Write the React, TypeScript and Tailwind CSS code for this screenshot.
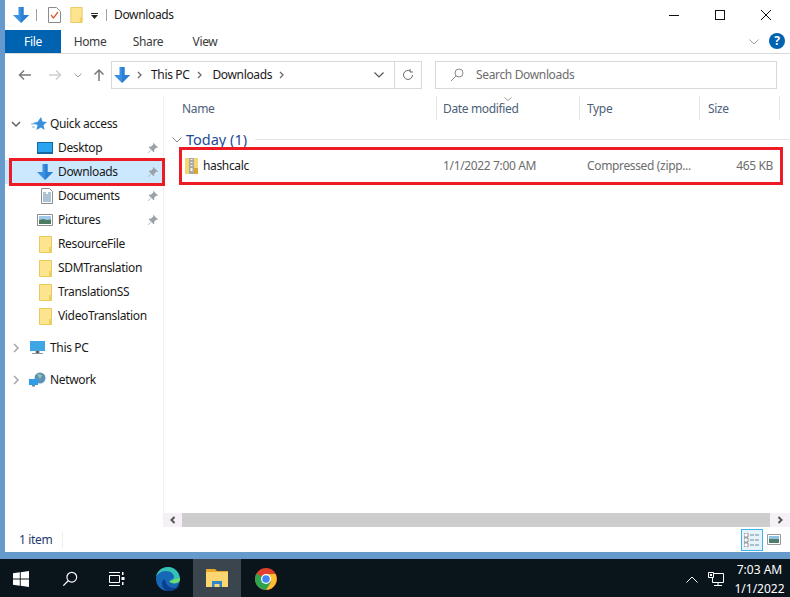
type IconProps = { className?: string };

function DownloadArrow({ className = "" }: IconProps) {
  return (
    <svg viewBox="0 0 16 16" className={className}>
      <path d="M5.500 0h5v8H16l-8 8-8-8h5.500z" fill="#3a8fe0" />
      <path d="M8 0h2.500v8H16l-8 8z" fill="#2b7fd6" />
    </svg>
  );
}

function FolderIcon({ className = "" }: IconProps) {
  return (
    <svg viewBox="0 0 13 17" className={className}>
      <path d="M.5.500h12v16H.5z" fill="#fde58f" stroke="#eac95f" />
      <path d="M10 11h2.500v5.500H10z" fill="#f3cf63" />
    </svg>
  );
}

function PinIcon() {
  return (
    <svg viewBox="0 0 12 12" className="h-3 w-3">
      <path d="M6.500 1l4.500 4.500-1 .6-.8-.3-2 2 .1 1.700-.8.8L4.200 7.800 1.500 11 1 10.500l3-2.900L1.700 5.200l.8-.8 1.700.1 2-2-.3-.8z" fill="#9ca3a8" />
    </svg>
  );
}

function Chevron({ open = false }: { open?: boolean }) {
  return (
    <svg viewBox="0 0 10 10" className="h-[10px] w-[10px]">
      {open ? (
        <path d="M1 3l4 4 4-4" fill="none" stroke="#5f5f5f" strokeWidth="1.500" />
      ) : (
        <path d="M3 1l4 4-4 4" fill="none" stroke="#a6a6a6" strokeWidth="1.500" />
      )}
    </svg>
  );
}

function Crumb() {
  return (
    <svg viewBox="0 0 6 8" className="h-2 w-[6px]">
      <path d="M1 1l3 3-3 3" fill="none" stroke="#6b6b6b" strokeWidth="1.300" />
    </svg>
  );
}

const pinned = [
  {
    label: "Desktop",
    icon: (
      <svg viewBox="0 0 16 12" className="h-3 w-4">
        <path d="M0 0h16v12H0z" fill="#14689f" />
        <path d="M1 1h14v9H1z" fill="#29a4ee" />
      </svg>
    ),
  },
  { label: "Downloads", icon: <DownloadArrow className="h-4 w-4" />, active: true },
  {
    label: "Documents",
    icon: (
      <svg viewBox="0 0 12 16" className="h-4 w-3">
        <path d="M.5.500h8l3 3v12H.5z" fill="#fff" stroke="#8d8d8d" />
        <path d="M2 5h3M2 7h8M2 9h8M2 11h8M2 13h8M7 5h3" stroke="#5b86ad" />
      </svg>
    ),
  },
  {
    label: "Pictures",
    icon: (
      <svg viewBox="0 0 16 12" className="h-3 w-4">
        <path d="M.5.500h15v11H.5z" fill="#fff" stroke="#8e8e8e" />
        <path d="M2 2h12v4H2z" fill="#9fc9e8" />
        <path d="M2 6l4-1 4 1 4-.500V10H2z" fill="#4c7a63" />
      </svg>
    ),
  },
];

const folders = ["ResourceFile", "SDMTranslation", "TranslationSS", "VideoTranslation"];

function Sidebar() {
  return (
    <aside className="flex w-[159px] shrink-0 flex-col border-r border-[#f0f0f0] pt-[16px] text-[12px] text-[#1a1a1a]">
      <div className="flex h-6 items-center pl-[6px]">
        <Chevron open />
        <svg viewBox="0 0 16 16" className="ml-[10px] h-4 w-4">
          <path d="M10 1l1.500 4.500L16 6l-3.500 3 1 5-3.500-2.500L5.500 14l1-5L1 7l5.500-1z" fill="#3a8fdc" />
          <path d="M0 8h4M1 11h3" stroke="#7ab4e8" />
        </svg>
        <span className="ml-[3px]">Quick access</span>
      </div>
      {pinned.map((item) => (
        <div
          key={item.label}
          className={`relative flex h-6 items-center ${item.active ? "bg-[#cce8ff]" : ""}`}
        >
          <span className="flex w-[53px] justify-end pr-[5px]">{item.icon}</span>
          <span className="flex-1">{item.label}</span>
          <span className="pr-[4px]">
            <PinIcon />
          </span>
          {item.active && (
            <div className="absolute -top-[2px] -bottom-[2px] left-[4px] -right-[2px] border-[3px] border-[#ed1c24]" />
          )}
        </div>
      ))}
      {folders.map((name) => (
        <div key={name} className="flex h-6 items-center">
          <span className="flex w-[53px] justify-end pr-[6px]">
            <FolderIcon className="h-[17px] w-[13px]" />
          </span>
          <span>{name}</span>
        </div>
      ))}
      <div className="mt-2 flex h-6 items-center pl-[6px]">
        <Chevron />
        <svg viewBox="0 0 17 14" className="ml-[8px] h-[14px] w-[17px]">
          <path d="M1 0h15v10H1z" fill="#3fa6e6" />
          <path d="M7 10h3v2H7zM3 12.500h11" stroke="#8b98a3" />
        </svg>
        <span className="ml-[4px]">This PC</span>
      </div>
      <div className="mt-2 flex h-6 items-center pl-[6px]">
        <Chevron />
        <svg viewBox="0 0 17 16" className="ml-[8px] h-4 w-[17px]">
          <circle cx="11" cy="6" r="5.500" fill="#5c93b8" />
          <path d="M8 2l5 1-2 4z" fill="#9cc7a0" />
          <path d="M0 7h9v6H0z" fill="#2f9ee6" />
          <path d="M3 13h3v1.500H3z" fill="#6e7f8c" />
        </svg>
        <span className="ml-[4px]">Network</span>
      </div>
    </aside>
  );
}

function Files() {
  return (
    <main className="flex min-w-0 flex-1 flex-col">
      <div className="flex h-[24px] items-center text-[12px] text-[#4c607a]">
        <div className="flex h-full w-[273px] items-center border-r border-[#e5e5e5] pl-[18px] pt-[1px]">Name</div>
        <div className="relative flex h-full w-[143px] items-center border-r border-[#e5e5e5] pl-[6px] pt-[1px]">
          Date modified
          <svg viewBox="0 0 8 4" className="absolute left-[67px] top-[1px] h-1 w-2">
            <path d="M.5.500L4 3.500 7.500.500" fill="none" stroke="#9a9a9a" />
          </svg>
        </div>
        <div className="flex h-full w-[120px] items-center border-r border-[#e5e5e5] pl-[7px] pt-[1px]">Type</div>
        <div className="flex h-full w-[80px] items-center border-r border-[#e5e5e5] pl-[8px] pt-[1px]">Size</div>
      </div>
      <div className="flex h-[27px] items-end pl-[8px]">
        <div className="flex h-[15px] w-full items-center">
          <svg viewBox="0 0 10 6" className="h-[6px] w-[10px]">
            <path d="M.5.500L5 5 9.500.500" fill="none" stroke="#8a8a8a" />
          </svg>
          <span className="ml-[4px] text-[14.500px] tracking-normal text-[#1e4a94]">Today (1)</span>
          <span className="ml-[8px] h-px flex-1 bg-[#e5e5e5]" />
        </div>
      </div>
      <div className="relative ml-[15px] mr-[7px] flex h-[38px] items-center text-[12px]">
        <div className="flex w-[264px] items-center pl-[6px] text-[#1a1a1a]">
          <svg viewBox="0 0 13 16" className="h-4 w-[13px]">
            <path d="M0 0h13v16H0z" fill="#f6d76f" />
            <path d="M9 10h4v6H9z" fill="#d9a92f" />
            <path d="M4 0h5v16H4z" fill="#a9a9a9" />
            <path d="M5.500 1h2v1h-2zM5.500 4h2v1h-2zM5.500 7h2v1h-2zM5.500 10h2v3h-2z" fill="#f2f2f2" />
          </svg>
          <span className="ml-[5px]">hashcalc</span>
        </div>
        <div className="w-[144px] text-[#6d6d6d]">1/1/2022 7:00 AM</div>
        <div className="w-[121px] text-[#6d6d6d]">Compressed (zipp...</div>
        <div className="w-[65px] text-right text-[#6d6d6d]">465 KB</div>
        <div className="absolute inset-0 border-[3px] border-[#ed1c24]" />
      </div>
      <div className="flex-1" />
      <div className="flex h-[14px] items-stretch">
        <div className="flex w-[18px] items-center justify-center bg-[#f5f0f5]">
          <svg viewBox="0 0 6 8" className="h-2 w-[6px]">
            <path d="M4.500 1L1.500 4l3 3" fill="none" stroke="#555" strokeWidth="2" />
          </svg>
        </div>
        <div className="flex-1 bg-[#cdcdcd]" />
        <div className="flex w-[20px] items-center justify-center bg-[#f5f0f5]">
          <svg viewBox="0 0 6 8" className="h-2 w-[6px]">
            <path d="M1.500 1l3 3-3 3" fill="none" stroke="#555" strokeWidth="2" />
          </svg>
        </div>
      </div>
    </main>
  );
}

function Taskbar() {
  return (
    <footer className="flex h-[38px] shrink-0 items-center bg-[#0a141b] text-white">
      <div className="flex w-[42px] justify-center pt-[2px]">
        <svg viewBox="0 0 16 16" className="h-4 w-4">
          <path d="M0 2.300l6.800-1v6.300H0zM7.700 1.200L16 0v7.600H7.700zM0 8.400h6.800v6.300l-6.800-1zM7.700 8.400H16V16l-8.300-1.200z" fill="#fff" />
        </svg>
      </div>
      <div className="flex w-[56px] justify-center pt-[2px]">
        <svg viewBox="0 0 18 18" className="h-4 w-4">
          <circle cx="11" cy="7" r="5.500" fill="none" stroke="#fff" strokeWidth="1.300" />
          <path d="M7 11l-5.500 5.500" stroke="#fff" strokeWidth="1.400" />
        </svg>
      </div>
      <div className="flex w-[38px] justify-center pt-[2px]">
        <svg viewBox="0 0 16 16" className="h-4 w-4">
          <path d="M.5 4.500h10v7H.5zM0 1.500h11M0 14.500h11" fill="none" stroke="#fff" />
          <path d="M13 1h1.500v3H13zM12.500 6h3v3h-3zM13 11h1.500v3H13z" fill="#fff" />
        </svg>
      </div>
      <div className="flex w-[57px] justify-center pl-[7px] pt-[2px]">
        <svg viewBox="0 0 24 24" className="h-6 w-6">
          <circle cx="12" cy="12" r="12" fill="#1667b5" />
          <path d="M24 13C24 6 19 0 12 0 6 0 1 4 0 10c2-4 6-6 10-6 5 0 8 3 8 6 0 2-2 3-4 3h10z" fill="#35c1b4" />
          <path d="M24 13c0 1-1 2-3 3-3 1-7 0-8-2l11-3z" fill="#6fdc6f" />
          <path d="M9 12c0 5 4 9 9 9 2 0 4-1 6-3-2 4-7 6-12 6C9 24 6 20 6 16c0-2 1-3 3-4z" fill="#0c3e8f" />
        </svg>
      </div>
      <div className="flex h-full w-[48px] items-center justify-center bg-[#3a454d]">
        <svg viewBox="0 0 22 18" className="h-[18px] w-[22px]">
          <path d="M0 0h9l2 2h11v16H0z" fill="#e8a92c" />
          <path d="M0 3h22v15H0z" fill="#fcd671" />
          <path d="M6 12h10v6h-2.500v-3h-5v3H6z" fill="#2f86c9" />
        </svg>
      </div>
      <div className="flex w-[48px] justify-center pl-[2px] pt-[2px]">
        <svg viewBox="0 0 22 22" className="h-[22px] w-[22px]">
          <circle cx="11" cy="11" r="11" fill="#e0412f" />
          <path d="M11 11L1.500 5.500A11 11 0 0 0 11 22l5-8z" fill="#2fa44f" />
          <path d="M11 6h9.500A11 11 0 0 1 11 22l5-8z" fill="#fbc02d" />
          <circle cx="11" cy="11" r="5" fill="#fff" />
          <circle cx="11" cy="11" r="3.800" fill="#4285f4" />
        </svg>
      </div>
      <div className="flex-1" />
      <svg viewBox="0 0 12 7" className="mt-[2px] h-[7px] w-3">
        <path d="M.5 6.500L6 1l5.500 5.500" fill="none" stroke="#fff" />
      </svg>
      <svg viewBox="0 0 16 15" className="ml-[10px] mt-[2px] h-[15px] w-4">
        <path d="M4.500 1.500h11v9h-11zM10 10.500v3M6 13.500h8" fill="none" stroke="#fff" />
        <path d="M.5.500h5v5h-5z" fill="#0a141b" stroke="#fff" />
        <path d="M2 2h2v2H2z" fill="#fff" />
      </svg>
      <div className="ml-[9px] mr-[4px] flex w-[53px] flex-col items-center pt-[1px] text-[12px] leading-[19px] tracking-normal">
        <span>7:03 AM</span>
        <span>1/1/2022</span>
      </div>
    </footer>
  );
}

export default function App() {
  return (
    <div className="flex h-[597px] w-[790px] flex-col overflow-hidden bg-white font-['Noto_Sans','Open_Sans',sans-serif] tracking-[-0.35px]">
      <div className="flex min-h-0 flex-1 flex-col border-b-[7px] border-l-[5px] border-[#6699cc]">
        {/* title bar */}
        <div className="flex h-[30px] shrink-0 items-center text-[12px] text-[#1a1a1a]">
          <DownloadArrow className="ml-[8px] h-4 w-4" />
          <span className="ml-[7px] h-[12px] w-px bg-[#a0a0a0]" />
          <svg viewBox="0 0 13 16" className="ml-[11px] h-4 w-[13px]">
            <path d="M.5.500h8l4 4v11H.5z" fill="#fff" stroke="#8a8a8a" />
            <path d="M3 8l2.500 3L10 5" fill="none" stroke="#e0552f" strokeWidth="1.300" />
          </svg>
          <FolderIcon className="ml-[9px] h-[16px] w-[13px]" />
          <svg viewBox="0 0 7 6" className="ml-[8px] mt-[2px] h-[6px] w-[7px]">
            <path d="M0 0h7v1H0zM0 2h7L3.500 6z" fill="#222" />
          </svg>
          <span className="ml-[8px] h-[12px] w-px bg-[#a0a0a0]" />
          <span className="ml-[7px]">Downloads</span>
          <div className="flex-1" />
          <div className="flex w-[46px] justify-center">
            <span className="h-px w-[10px] bg-[#111]" />
          </div>
          <div className="flex w-[46px] justify-center">
            <span className="h-[10px] w-[10px] border border-[#111]" />
          </div>
          <div className="mr-[1px] flex w-[46px] justify-center">
            <svg viewBox="0 0 10 10" className="h-[10px] w-[10px]">
              <path d="M0 0l10 10M10 0L0 10" stroke="#111" />
            </svg>
          </div>
        </div>

        {/* ribbon tabs */}
        <div className="flex h-[24px] shrink-0 items-stretch border-b border-[#dadada] text-[12px] text-[#3b3b3b]">
          <div className="flex w-[56px] items-center justify-center bg-[#0063b1] text-white">File</div>
          <div className="flex w-[58px] items-center justify-center">Home</div>
          <div className="flex w-[58px] items-center justify-center">Share</div>
          <div className="flex w-[56px] items-center justify-center">View</div>
          <div className="flex-1" />
          <svg viewBox="0 0 10 6" className="mr-[10px] mt-[9px] h-[6px] w-[10px]">
            <path d="M.5.500L5 5 9.500.500" fill="none" stroke="#9a9a9a" />
          </svg>
          <div className="mr-[5px] mt-[3px] flex h-4 w-4 items-center justify-center rounded-full bg-[#0063b1] text-[12px] font-bold text-white">
            ?
          </div>
        </div>

        {/* address row */}
        <div className="flex h-[42px] shrink-0 items-center text-[12px] text-[#1a1a1a]">
          <svg viewBox="0 0 14 12" className="ml-[13px] h-3 w-[14px]">
            <path d="M13 6H2M6 1.500L1.500 6 6 10.500" fill="none" stroke="#7a7a7a" strokeWidth="1.500" />
          </svg>
          <svg viewBox="0 0 14 12" className="ml-[16px] h-3 w-[14px]">
            <path d="M1 6h11M8 1.500L12.500 6 8 10.500" fill="none" stroke="#d0d0d0" strokeWidth="1.500" />
          </svg>
          <svg viewBox="0 0 8 5" className="ml-[12px] h-[5px] w-2">
            <path d="M.5.500L4 4 7.500.500" fill="none" stroke="#9a9a9a" />
          </svg>
          <svg viewBox="0 0 12 14" className="ml-[11px] h-[14px] w-3">
            <path d="M6 13V2M1.500 6.500L6 2l4.500 4.500" fill="none" stroke="#7a7a7a" strokeWidth="1.500" />
          </svg>
          <div className="ml-[6px] flex h-[28px] w-[311px] items-center border border-[#d9d9d9]">
            <DownloadArrow className="ml-[2px] h-4 w-4" />
            <span className="ml-[7px]"><Crumb /></span>
            <span className="ml-[8px]">This PC</span>
            <span className="ml-[8px]"><Crumb /></span>
            <span className="ml-[9px]">Downloads</span>
            <span className="ml-[7px]"><Crumb /></span>
            <div className="flex-1" />
            <svg viewBox="0 0 10 6" className="mr-[10px] h-[6px] w-[10px]">
              <path d="M.5.500L5 5 9.500.500" fill="none" stroke="#555" strokeWidth="1.200" />
            </svg>
            <div className="flex h-full w-[27px] items-center justify-center border-l border-[#d9d9d9]">
              <svg viewBox="0 0 12 12" className="h-3 w-3">
                <path d="M10.500 6A4.500 4.500 0 1 1 8.500 2.200M8 0v3h3" fill="none" stroke="#6a6a6a" />
              </svg>
            </div>
          </div>
          <div className="ml-[13px] flex h-[28px] w-[342px] items-center border border-[#d9d9d9] text-[#6d6d6d]">
            <svg viewBox="0 0 14 14" className="ml-[14px] h-[14px] w-[14px]">
              <circle cx="9" cy="5" r="4" fill="none" stroke="#8a8a8a" />
              <path d="M6 8l-5 5" stroke="#8a8a8a" />
            </svg>
            <span className="ml-[12px]">Search Downloads</span>
          </div>
        </div>

        {/* body */}
        <div className="flex min-h-0 flex-1">
          <Sidebar />
          <Files />
        </div>

        {/* status bar */}
        <div className="flex h-[25px] shrink-0 items-center text-[12px] text-[#1e3a6e]">
          <span className="pl-[14px]">1 item</span>
          <span className="ml-[10px] h-[16px] w-px bg-[#eeeeee]" />
          <div className="flex-1" />
          <div className="flex h-[22px] w-[22px] items-center justify-center border border-[#3ab4ea] bg-[#e5f3fb]">
            <svg viewBox="0 0 16 14" className="h-[14px] w-4">
              <path d="M0 0h4v4H0zM0 5h4v4H0zM0 10h4v4H0z" fill="#fff" stroke="#7a7a7a" strokeWidth=".8" />
              <path d="M6 2h4M11 2h4M6 7h4M11 7h4M6 12h4M11 12h4" stroke="#74869c" />
            </svg>
          </div>
          <svg viewBox="0 0 14 11" className="ml-[4px] mr-[9px] h-[11px] w-[14px]">
            <path d="M.5.500h13v10H.5z" fill="#fff" stroke="#9a9a9a" />
            <path d="M2 2h10v3H2z" fill="#8fc3e3" />
            <path d="M2 5h10v4H2z" fill="#4f7f6a" />
          </svg>
        </div>
      </div>
      <Taskbar />
    </div>
  );
}
